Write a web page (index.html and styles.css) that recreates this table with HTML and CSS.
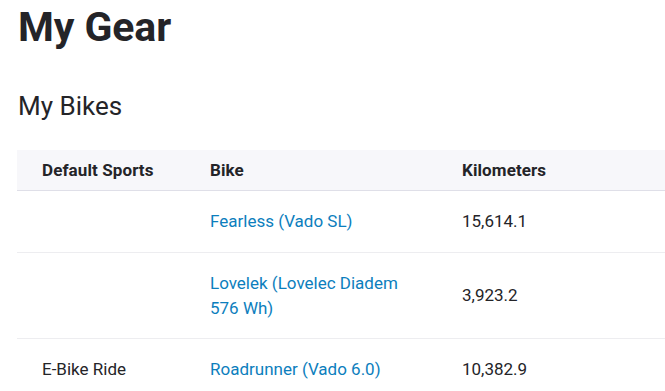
FILE: index.html
```html
<!DOCTYPE html>
<html>
<head>
<meta charset="utf-8">
<link rel="stylesheet" href="styles.css">
</head>
<body>
<div class="page">
  <h1 class="title">My Gear</h1>
  <h2 class="subtitle">My Bikes</h2>
  <table class="gear">
    <colgroup><col class="w1"><col class="w2"><col class="w3"></colgroup>
    <thead>
      <tr><th>Default Sports</th><th>Bike</th><th>Kilometers</th></tr>
    </thead>
    <tbody>
      <tr class="r1"><td></td><td><a href="#">Fearless (Vado SL)</a></td><td>15,614.1</td></tr>
      <tr class="r2"><td></td><td><a href="#">Lovelek (Lovelec Diadem 576 Wh)</a></td><td>3,923.2</td></tr>
      <tr class="r3"><td>E-Bike Ride</td><td><a href="#">Roadrunner (Vado 6.0)</a></td><td>10,382.9</td></tr>
    </tbody>
  </table>
</div>
</body>
</html>
```
FILE: styles.css
```css
html, body { margin: 0; padding: 0; background: #fff; }
body { font-family: Roboto, "Liberation Sans", sans-serif; color: #242428; }
.page { padding: 0 0 0 17px; }
.title { margin: 0; padding-top: 2px; padding-left: 1px; font-size: 41px; line-height: 50px; font-weight: 700; letter-spacing: -0.1px; }
.subtitle { margin: 38px 0 0 0; padding-left: 1px; font-size: 26px; line-height: 32px; font-weight: 400; }
.gear { margin-top: 28px; border-collapse: collapse; table-layout: fixed; width: 720px; font-size: 17px; }
.w1 { width: 193px; }
.w2 { width: 252px; }
.w3 { width: 275px; }
.gear th { background: #f7f7fa; text-align: left; font-weight: 700; font-size: 17px; letter-spacing: 0.1px; height: 40px; padding: 0; border-bottom: 1px solid #dfdfe8; }
.gear td { padding: 0; text-align: left; vertical-align: middle; border-bottom: 1px solid #ededf0; line-height: 25px; }
.gear th:first-child, .gear td:first-child { padding-left: 25px; }
.gear td:nth-child(2) { padding-right: 50px; }
.r1 td { height: 61px; }
.r2 td { height: 85px; }
.r3 td { height: 61px; }
.gear a { color: #0c7ebd; text-decoration: none; }
```
